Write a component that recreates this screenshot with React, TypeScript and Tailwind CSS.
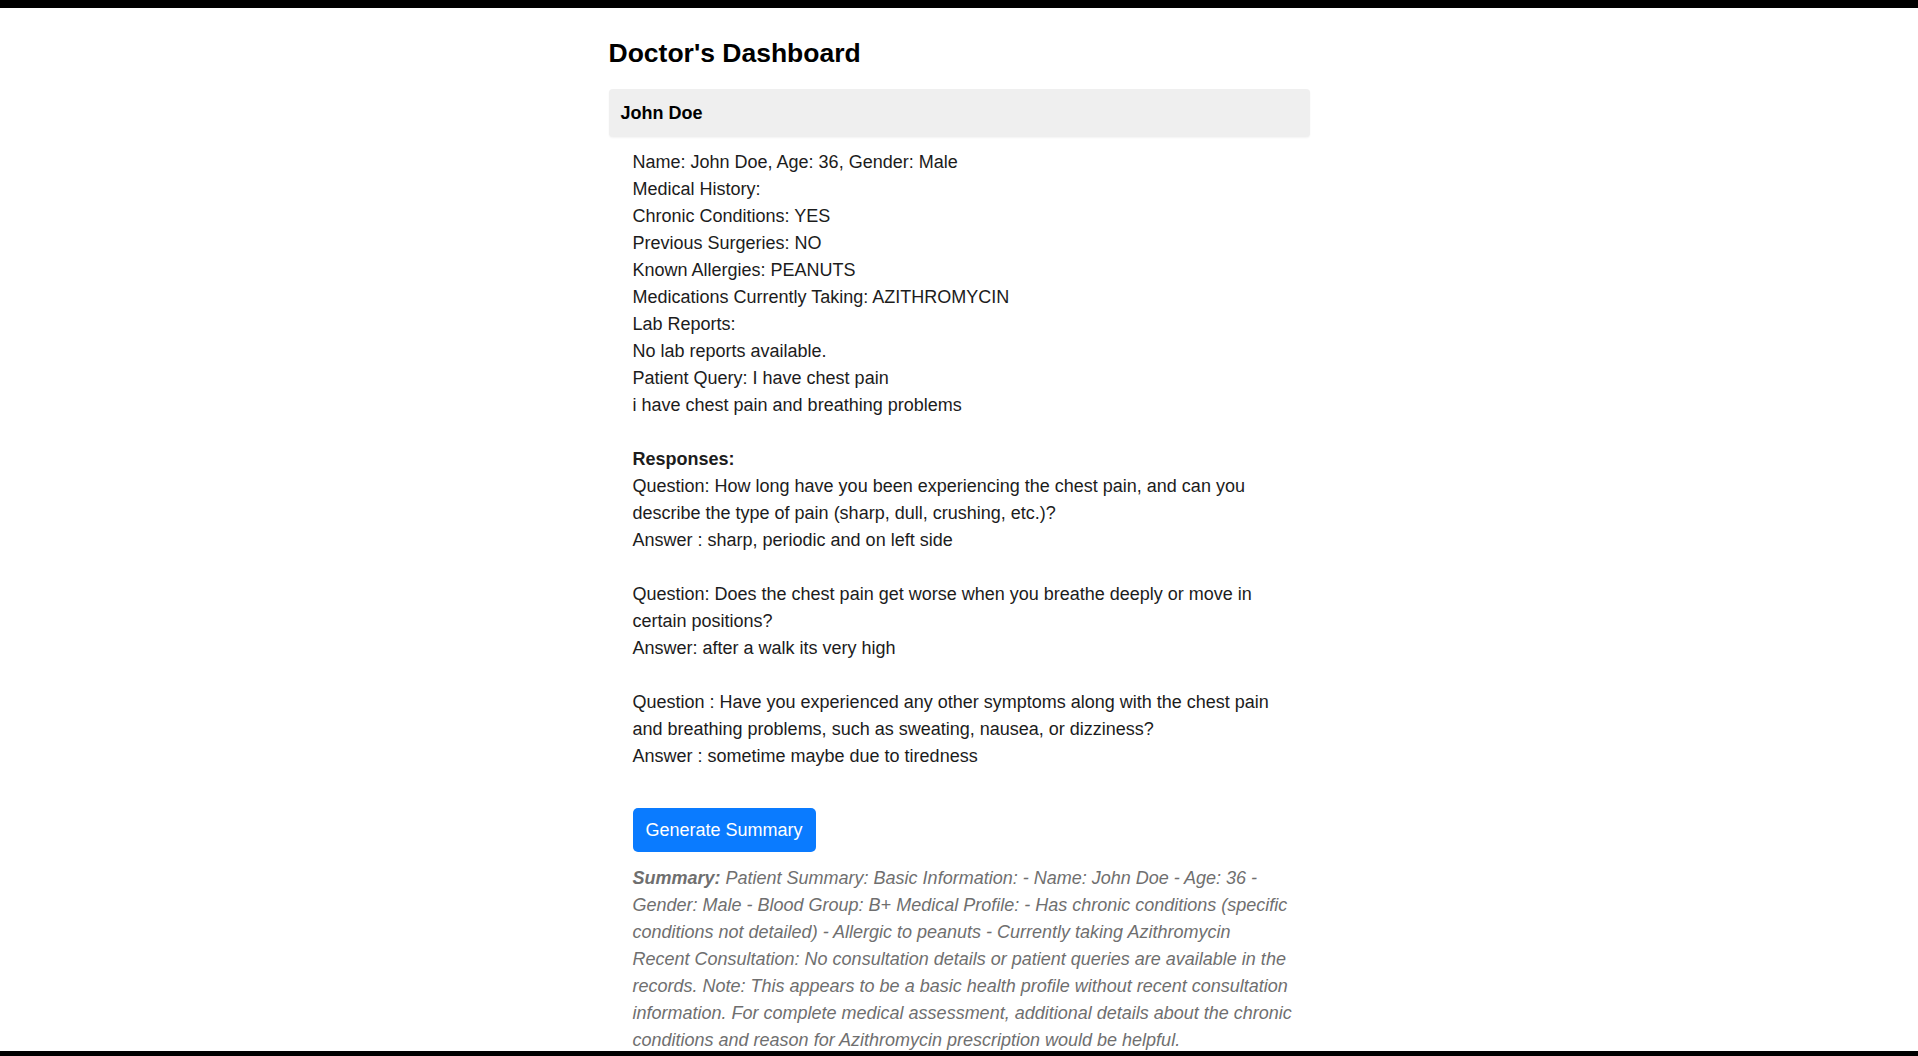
import React from "react";

type QA = {
    question: string[]
    answer: string
}

const patientLines = [
    "Name: John Doe, Age: 36, Gender: Male",
    "Medical History:",
    "Chronic Conditions: YES",
    "Previous Surgeries: NO",
    "Known Allergies: PEANUTS",
    "Medications Currently Taking: AZITHROMYCIN",
    "Lab Reports:",
    "No lab reports available.",
    "Patient Query: I have chest pain",
    "i have chest pain and breathing problems",
]

const responses: QA[] = [
    {
        question: [
            "Question: How long have you been experiencing the chest pain, and can you",
            "describe the type of pain (sharp, dull, crushing, etc.)?",
        ],
        answer: "Answer : sharp, periodic and on left side",
    },
    {
        question: [
            "Question: Does the chest pain get worse when you breathe deeply or move in",
            "certain positions?",
        ],
        answer: "Answer: after a walk its very high",
    },
    {
        question: [
            "Question : Have you experienced any other symptoms along with the chest pain",
            "and breathing problems, such as sweating, nausea, or dizziness?",
        ],
        answer: "Answer : sometime maybe due to tiredness",
    },
]

const summaryLines = [
    "Patient Summary: Basic Information: - Name: John Doe - Age: 36 -",
    "Gender: Male - Blood Group: B+ Medical Profile: - Has chronic conditions (specific",
    "conditions not detailed) - Allergic to peanuts - Currently taking Azithromycin",
    "Recent Consultation: No consultation details or patient queries are available in the",
    "records. Note: This appears to be a basic health profile without recent consultation",
    "information. For complete medical assessment, additional details about the chronic",
    "conditions and reason for Azithromycin prescription would be helpful.",
]

const App = () => {
    return (
        <div className="h-screen flex flex-col overflow-hidden bg-white font-['Liberation_Sans',Arial,sans-serif] text-[#1c1c1c]">
            {/* letterbox top */}
            <div className="h-[8px] shrink-0 bg-black" />

            <div className="flex-1 overflow-hidden">
                <div className="w-[701px] mx-auto pt-[30px]">
                    <h2 className="text-[26.5px] leading-[31px] font-bold text-black mb-[20px]">
                        Doctor's Dashboard
                    </h2>

                    {/* patient header */}
                    <div className="h-[48px] flex items-center px-[12px] bg-[#efefef] rounded-[4px] shadow-[0_1px_2px_rgba(0,0,0,0.05)]">
                        <span className="text-[18px] leading-[27px] font-bold text-black">John Doe</span>
                    </div>

                    {/* patient details */}
                    <div className="mt-[12px] pl-[24px] text-[18px] leading-[27px]">
                        {patientLines.map((line, i) => (
                            <div key={i}>{line}</div>
                        ))}
                        <div className="h-[27px]" />
                        <div className="font-bold">Responses:</div>
                        {responses.map((r, i) => (
                            <div key={i}>
                                {i > 0 && <div className="h-[27px]" />}
                                {r.question.map((q, j) => (
                                    <div key={j} className="whitespace-nowrap">{q}</div>
                                ))}
                                <div>{r.answer}</div>
                            </div>
                        ))}

                        <button
                            type="button"
                            className="mt-[38px] h-[44px] px-[13px] bg-[#0a7bff] text-white text-[18px] leading-[27px] rounded-[5px]"
                        >
                            Generate Summary
                        </button>

                        <div className="mt-[13px] italic text-[#6f6f6f]">
                            {summaryLines.map((line, i) => (
                                <div key={i} className="whitespace-nowrap">
                                    {i === 0 && <span className="font-bold">Summary: </span>}
                                    {line}
                                </div>
                            ))}
                        </div>
                    </div>
                </div>
            </div>

            {/* letterbox bottom */}
            <div className="h-[5px] shrink-0 bg-black" />
        </div>
    );
};

export default App;
